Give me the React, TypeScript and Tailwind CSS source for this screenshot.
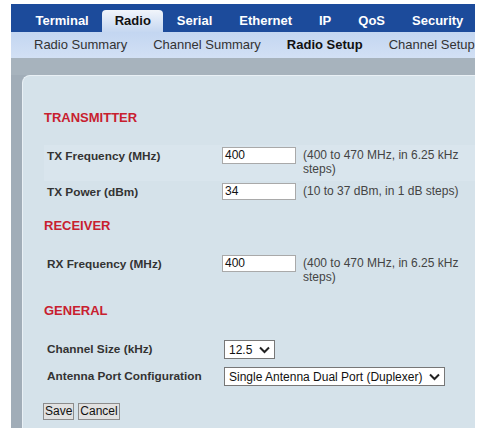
import React from 'react';

const tabs = ['Terminal', 'Radio', 'Serial', 'Ethernet', 'IP', 'QoS', 'Security'];
const subTabs = ['Radio Summary', 'Channel Summary', 'Radio Setup', 'Channel Setup'];

const Chevron: React.FC = () => (
  <svg width="11" height="8" viewBox="0 0 11 8" className="shrink-0">
    <path d="M1 1.5 L5.5 6 L10 1.5" fill="none" stroke="#222" strokeWidth="2" />
  </svg>
);

const Heading: React.FC<{ text: string; className: string }> = ({ text, className }) => (
  <h3 className={`h-4 text-[13px] leading-4 font-bold text-[#c8202f] ${className}`}>{text}</h3>
);

const TextRow: React.FC<{ label: string; value: string; help: string; className: string }> = ({
  label,
  value,
  help,
  className,
}) => (
  <div className={`flex items-start pt-[2px] pl-[3px] ${className}`}>
    <div className="w-[175px] pt-[1px] text-[11.8px] leading-4 font-bold text-[#333]">{label}</div>
    <div className="h-[17px] w-[74px] border border-[#a9a9a9] bg-white px-[2px] text-[12px] leading-[15px] text-[#111]">
      {value}
    </div>
    <div className="ml-[7px] w-[160px] pt-[1px] text-[12px] leading-[14px] text-[#444]">{help}</div>
  </div>
);

const SelectRow: React.FC<{ label: string; value: string; width: string; className?: string }> = ({
  label,
  value,
  width,
  className,
}) => (
  <div className={`flex h-[27px] items-start pt-[2px] pl-[3px] ${className ?? ''}`}>
    <div className="w-[177px] pt-[1px] text-[11.8px] leading-4 font-bold text-[#333]">{label}</div>
    <div
      className={`flex h-[19px] items-center justify-between border border-[#777] bg-white pl-[4px] pr-[4px] text-[12px] text-[#111] ${width}`}
    >
      <span>{value}</span>
      <Chevron />
    </div>
  </div>
);

const App: React.FC = () => {
  return (
    <div className="min-h-[435px] bg-white pt-1 pl-[11px] font-['Liberation_Sans',Arial,sans-serif]">
      <div className="w-[464px]">
        {/* Main tabs */}
        <div className="flex h-[28px] items-end bg-[#1c4b9b] pl-[11px]">
          {tabs.map((t) =>
            t === 'Radio' ? (
              <div
                key={t}
                className="flex h-[22px] items-center rounded-t-[4px] bg-gradient-to-b from-[#f1f5fb] to-[#c5d7f1] px-[12.5px] text-[13px] font-bold text-[#111]"
              >
                {t}
              </div>
            ) : (
              <div key={t} className="flex h-[22px] items-center px-[13.5px] text-[13px] font-bold text-white">
                {t}
              </div>
            )
          )}
        </div>

        {/* Sub nav */}
        <div className="flex h-[26px] items-center bg-gradient-to-b from-[#c3d6f1] to-[#d2e0f4] pl-[10px]">
          {subTabs.map((t) => (
            <div
              key={t}
              className={`px-[13px] text-[13px] whitespace-nowrap ${
                t === 'Radio Setup' ? 'font-bold text-[#111]' : 'text-[#333]'
              }`}
            >
              {t}
            </div>
          ))}
        </div>

        <div className="h-[17px] bg-[#a7b3bd]" />

        {/* Form panel */}
        <div className="flex bg-[#a1adb8]">
          <div className="w-[11px] shrink-0" />
          <div className="flex-1 rounded-tl-[8px] border-t border-l border-[#e9f0f5] bg-[#d5e2ea] pl-[21px] pb-2">
            <Heading text="TRANSMITTER" className="mt-[34px]" />
            <TextRow
              className="mt-[19px] h-[36px] bg-[#d9e5ed]"
              label="TX Frequency (MHz)"
              value="400"
              help="(400 to 470 MHz, in 6.25 kHz steps)"
            />
            <TextRow
              className="h-[23px]"
              label="TX Power (dBm)"
              value="34"
              help="(10 to 37 dBm, in 1 dB steps)"
            />

            <Heading text="RECEIVER" className="mt-[14px]" />
            <TextRow
              className="mt-[19px] h-[36px]"
              label="RX Frequency (MHz)"
              value="400"
              help="(400 to 470 MHz, in 6.25 kHz steps)"
            />

            <Heading text="GENERAL" className="mt-[14px]" />
            <SelectRow className="mt-[19px]" label="Channel Size (kHz)" value="12.5" width="w-[51px]" />
            <SelectRow label="Antenna Port Configuration" value="Single Antenna Dual Port (Duplexer)" width="w-[221px]" />

            <div className="-ml-[1px] mt-[11px] flex gap-[4px]">
              <button className="h-[17px] border border-[#8c8c8c] bg-[#e1e1e1] px-[1px] text-[12px] leading-[15px] text-[#111]">
                Save
              </button>
              <button className="h-[17px] border border-[#8c8c8c] bg-[#e1e1e1] px-[1px] text-[12px] leading-[15px] text-[#111]">
                Cancel
              </button>
            </div>
          </div>
        </div>
      </div>
    </div>
  );
};

export default App;
